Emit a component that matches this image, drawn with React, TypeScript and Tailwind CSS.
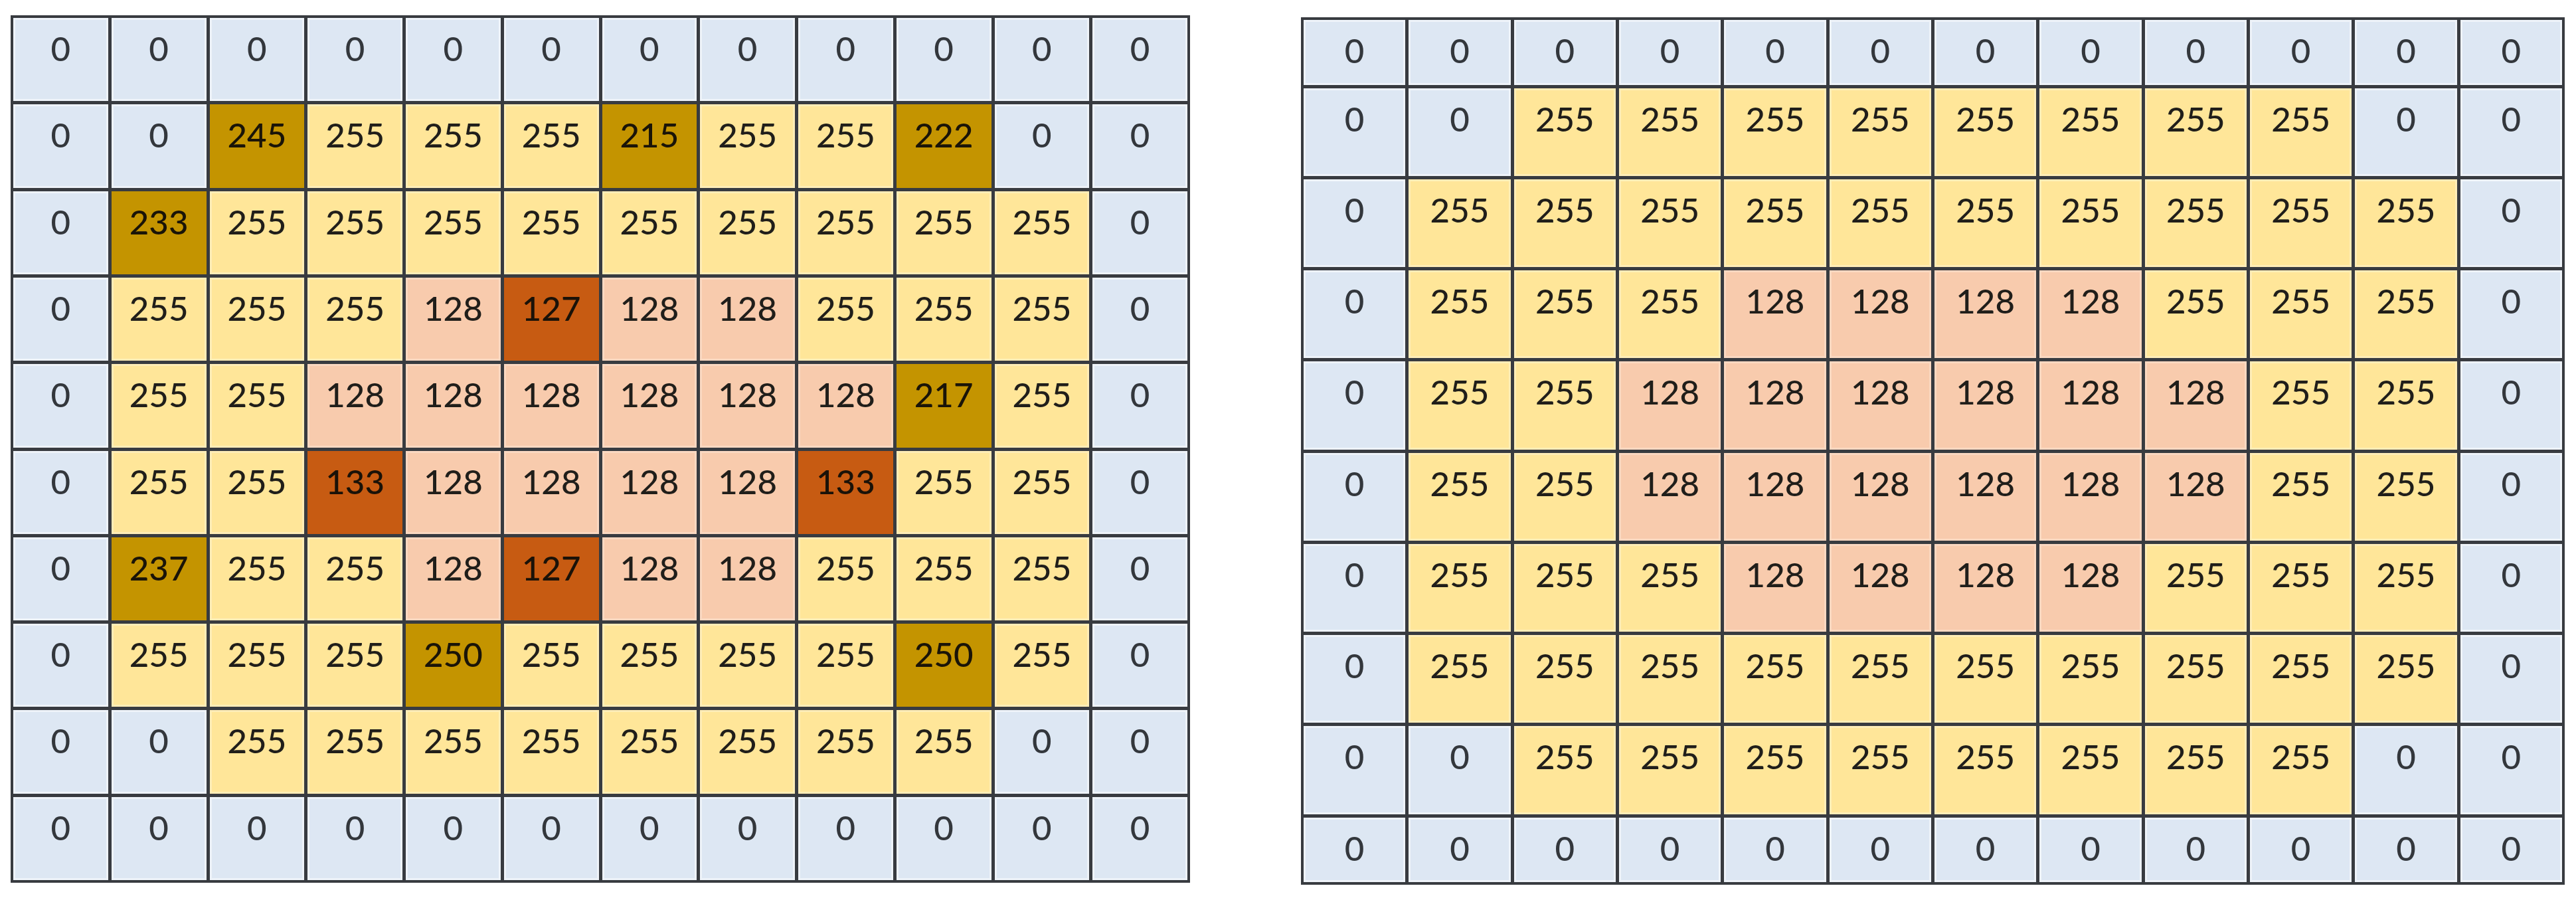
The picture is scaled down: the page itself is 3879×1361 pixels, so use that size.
import React from "react";

const LEFT: number[][] = [
  [0, 0, 0, 0, 0, 0, 0, 0, 0, 0, 0, 0],
  [0, 0, 245, 255, 255, 255, 215, 255, 255, 222, 0, 0],
  [0, 233, 255, 255, 255, 255, 255, 255, 255, 255, 255, 0],
  [0, 255, 255, 255, 128, 127, 128, 128, 255, 255, 255, 0],
  [0, 255, 255, 128, 128, 128, 128, 128, 128, 217, 255, 0],
  [0, 255, 255, 133, 128, 128, 128, 128, 133, 255, 255, 0],
  [0, 237, 255, 255, 128, 127, 128, 128, 255, 255, 255, 0],
  [0, 255, 255, 255, 250, 255, 255, 255, 255, 250, 255, 0],
  [0, 0, 255, 255, 255, 255, 255, 255, 255, 255, 0, 0],
  [0, 0, 0, 0, 0, 0, 0, 0, 0, 0, 0, 0],
];

const RIGHT: number[][] = [
  [0, 0, 0, 0, 0, 0, 0, 0, 0, 0, 0, 0],
  [0, 0, 255, 255, 255, 255, 255, 255, 255, 255, 0, 0],
  [0, 255, 255, 255, 255, 255, 255, 255, 255, 255, 255, 0],
  [0, 255, 255, 255, 128, 128, 128, 128, 255, 255, 255, 0],
  [0, 255, 255, 128, 128, 128, 128, 128, 128, 255, 255, 0],
  [0, 255, 255, 128, 128, 128, 128, 128, 128, 255, 255, 0],
  [0, 255, 255, 255, 128, 128, 128, 128, 255, 255, 255, 0],
  [0, 255, 255, 255, 255, 255, 255, 255, 255, 255, 255, 0],
  [0, 0, 255, 255, 255, 255, 255, 255, 255, 255, 0, 0],
  [0, 0, 0, 0, 0, 0, 0, 0, 0, 0, 0, 0],
];

function cellClass(v: number): string {
  if (v === 0)
    return "bg-[#dde7f3] text-[#33373c] shadow-[inset_0_0_0_3px_rgba(255,255,255,0.5)]";
  if (v === 255)
    return "bg-[#ffe699] text-[#201e1a] shadow-[inset_0_0_0_3px_rgba(255,255,255,0.3)]";
  if (v === 128)
    return "bg-[#f8cbad] text-[#201e1a] shadow-[inset_0_0_0_3px_rgba(255,255,255,0.25)]";
  if (v === 127 || v === 133) return "bg-[#c75b12] text-[#1a1208]";
  return "bg-[#c49400] text-[#1a1408]";
}

function Cell({ v }: { v: number }) {
  return (
    <div
      className={`flex justify-center pt-[20px] text-[51px] font-medium leading-none font-['Lato','Open_Sans',sans-serif] ${cellClass(v)}`}
    >
      {v}
    </div>
  );
}

export default function App() {
  return (
    <div className="w-[3879px] h-[1361px] bg-white flex items-start pl-[16px] pt-[23px] gap-[167px] overflow-hidden">
      <div className="w-[1776px] h-[1306px] grid grid-cols-12 grid-rows-10 gap-[5px] p-[4px] bg-[#383b40]">
        {LEFT.flatMap((row, r) => row.map((v, c) => <Cell key={`l${r}-${c}`} v={v} />))}
      </div>
      <div className="mt-[3px] w-[1903px] h-[1306px] grid grid-cols-12 grid-rows-[97.5px_repeat(8,minmax(0,1fr))_97.5px] gap-[5px] p-[4px] bg-[#383b40]">
        {RIGHT.flatMap((row, r) => row.map((v, c) => <Cell key={`r${r}-${c}`} v={v} />))}
      </div>
    </div>
  );
}
